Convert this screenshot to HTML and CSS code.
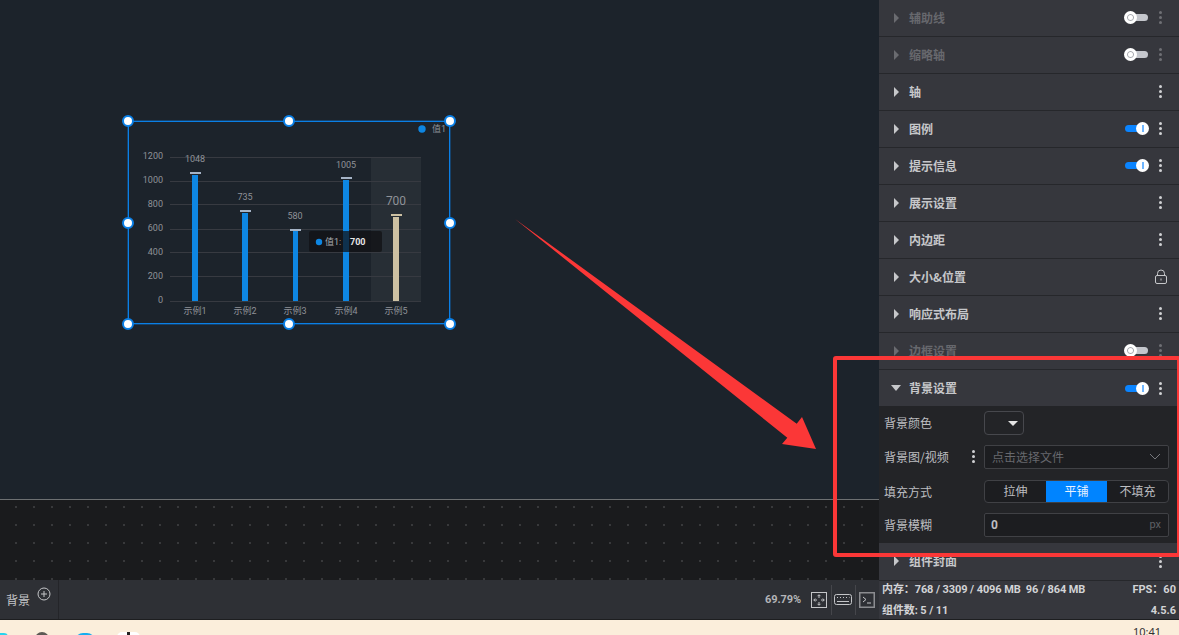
FILE: index.html
```html
<!DOCTYPE html>
<html lang="zh-CN">
<head>
  <meta charset="UTF-8" />
  <title>背景设置</title>
  <link rel="stylesheet" href="styles.css">
</head>

<body>
  <div class="app">
    <div class="workspace">
      <div class="stage">
        <div class="canvas">
          <!-- Selected chart widget -->
          <div class="widget">
            <svg class="chart" width="322" height="203" viewBox="0 0 322 203">
              <rect class="band" x="243" y="36" width="50" height="144" />
              <g class="grid">
                <line x1="42" x2="293" y1="36.500" y2="36.500" />
                <line x1="42" x2="293" y1="60.500" y2="60.500" />
                <line x1="42" x2="293" y1="83.500" y2="83.500" />
                <line x1="42" x2="293" y1="108.500" y2="108.500" />
                <line x1="42" x2="293" y1="131.500" y2="131.500" />
                <line x1="42" x2="293" y1="155.500" y2="155.500" />
                <line x1="42" x2="293" y1="180.500" y2="180.500" />
              </g>
              <g class="tick" text-anchor="end">
                <text x="35" y="38">1200</text>
                <text x="35" y="62">1000</text>
                <text x="35" y="86">800</text>
                <text x="35" y="110">600</text>
                <text x="35" y="134">400</text>
                <text x="35" y="158">200</text>
                <text x="35" y="182">0</text>
              </g>
              <g class="bar">
                <rect x="64" y="54" width="6" height="126" />
                <rect x="114" y="92" width="6" height="88" />
                <rect x="165" y="110" width="5" height="70" />
                <rect x="215" y="59" width="6" height="121" />
              </g>
              <rect class="bar-on" x="265" y="96" width="6" height="84" />
              <g class="cap">
                <rect x="62" y="51" width="11" height="2" />
                <rect x="112" y="89" width="11" height="2" />
                <rect x="162" y="108" width="11" height="2" />
                <rect x="213" y="56" width="11" height="2" />
              </g>
              <rect class="cap-on" x="263" y="93" width="11" height="2" />
              <g class="tick" text-anchor="middle">
                <text x="67" y="41">1048</text>
                <text x="117" y="79">735</text>
                <text x="167" y="98">580</text>
                <text x="218" y="47">1005</text>
                <text class="tick-on" x="268" y="84">700</text>
                <text x="67" y="193">示例1</text>
                <text x="117" y="193">示例2</text>
                <text x="167" y="193">示例3</text>
                <text x="218" y="193">示例4</text>
                <text x="268" y="193">示例5</text>
              </g>
              <circle class="dot" cx="294" cy="8" r="3.700" />
              <text class="tick" x="304" y="11">值1</text>
              <!-- Tooltip -->
              <rect class="tip" x="181" y="110" width="73" height="21" rx="2" />
              <circle class="dot" cx="191" cy="121" r="3.200" />
              <text class="tip-key" x="197" y="124">值1:</text>
              <text class="tip-val" x="222" y="124">700</text>
            </svg>
            <span class="handle tl"></span>
            <span class="handle tc"></span>
            <span class="handle tr"></span>
            <span class="handle ml"></span>
            <span class="handle mr"></span>
            <span class="handle bl"></span>
            <span class="handle bc"></span>
            <span class="handle br"></span>
          </div>
        </div>
        <div class="ruler"></div>
      </div>

      <div class="panel">
        <div class="row off"><i class="caret"></i><span class="row-title">辅助线</span><span class="switch"></span><span class="more"><i></i><i></i><i></i></span></div>
        <div class="row off"><i class="caret"></i><span class="row-title">缩略轴</span><span class="switch"></span><span class="more"><i></i><i></i><i></i></span></div>
        <div class="row"><i class="caret"></i><span class="row-title">轴</span><span class="more"><i></i><i></i><i></i></span></div>
        <div class="row"><i class="caret"></i><span class="row-title">图例</span><span class="switch on"></span><span class="more"><i></i><i></i><i></i></span></div>
        <div class="row"><i class="caret"></i><span class="row-title">提示信息</span><span class="switch on"></span><span class="more"><i></i><i></i><i></i></span></div>
        <div class="row"><i class="caret"></i><span class="row-title">展示设置</span><span class="more"><i></i><i></i><i></i></span></div>
        <div class="row"><i class="caret"></i><span class="row-title">内边距</span><span class="more"><i></i><i></i><i></i></span></div>
        <div class="row"><i class="caret"></i><span class="row-title">大小&amp;位置</span>
          <svg class="lock" width="14" height="16" viewBox="0 0 14 16">
            <path d="M3.500 6.500V4.500a3.500 3.500 0 0 1 7 0v2" />
            <rect x="1.500" y="6.500" width="11" height="8" rx="1.500" />
            <line x1="7" y1="9.500" x2="7" y2="11.500" />
          </svg>
        </div>
        <div class="row"><i class="caret"></i><span class="row-title">响应式布局</span><span class="more"><i></i><i></i><i></i></span></div>
        <div class="row off"><i class="caret"></i><span class="row-title">边框设置</span><span class="switch"></span><span class="more"><i></i><i></i><i></i></span></div>
        <div class="row open"><i class="caret"></i><span class="row-title">背景设置</span><span class="switch on"></span><span class="more"><i></i><i></i><i></i></span></div>

        <div class="form">
          <div class="field">
            <label class="field-label">背景颜色</label>
            <div class="color-btn"><i class="color-arrow"></i></div>
          </div>
          <div class="field">
            <label class="field-label">背景图/视频</label>
            <span class="more small"><i></i><i></i><i></i></span>
            <div class="input select">
              <span class="placeholder">点击选择文件</span>
              <svg width="12" height="7" viewBox="0 0 12 7"><path d="M1 1l5 5 5-5" /></svg>
            </div>
          </div>
          <div class="field">
            <label class="field-label">填充方式</label>
            <div class="segments">
              <span class="segment">拉伸</span>
              <span class="segment active">平铺</span>
              <span class="segment">不填充</span>
            </div>
          </div>
          <div class="field">
            <label class="field-label">背景模糊</label>
            <div class="input">
              <span class="input-val">0</span>
              <span class="unit">px</span>
            </div>
          </div>
        </div>

        <div class="row last"><i class="caret"></i><span class="row-title">组件封面</span><span class="more"><i></i><i></i><i></i></span></div>
      </div>
    </div>

    <div class="statusrow">
      <div class="tabbar">
        <div class="tab">
          <span class="tab-name">背景</span>
          <svg class="tab-add" width="14" height="14" viewBox="0 0 14 14">
            <circle cx="7" cy="7" r="6" />
            <path d="M7 4v6M4 7h6" />
          </svg>
        </div>
        <div class="tools">
          <span class="zoom-val">69.79%</span>
          <svg class="tool" width="16" height="16" viewBox="0 0 16 16">
            <rect x="0.500" y="0.500" width="15" height="15" />
            <path d="M8 3v3M6.500 4.200L8 2.700l1.500 1.500M8 13v-3M6.500 11.800L8 13.300l1.500-1.500M3 8h3M4.200 6.500L2.700 8l1.500 1.500M13 8h-3M11.800 6.500L13.300 8l-1.500 1.500" />
          </svg>
          <span class="tool-sep"></span>
          <svg class="tool keys" width="18" height="11" viewBox="0 0 18 11">
            <rect x="0.500" y="0.500" width="17" height="10" rx="2" />
            <path d="M3 3.500h1M6 3.500h1M9 3.500h1M12 3.500h1M15 3.500h0.500M3 7.500h12" />
          </svg>
          <span class="tool-sep near"></span>
          <svg class="tool term" width="16" height="16" viewBox="0 0 16 16">
            <rect x="0.750" y="0.750" width="14.500" height="14.500" />
            <path d="M4 5l3 2.500L4 10M8 11h4" />
          </svg>
        </div>
      </div>
      <div class="stats">
        <div class="stats-line"><span class="tight">内存：768 / 3309 / 4096 MB&nbsp;&nbsp;96 / 864 MB</span><span>FPS：60</span></div>
        <div class="stats-line"><span class="tight">组件数: 5 / 11</span><span>4.5.6</span></div>
      </div>
    </div>

    <div class="taskbar">
      <i class="app-icon cyan"></i>
      <i class="app-icon grey"></i>
      <i class="app-icon blue"></i>
      <i class="app-icon white"></i>
      <span class="clock">10:41</span>
    </div>
  </div>

  <!-- Red annotation drawn on top of the screenshot -->
  <div class="mark-box"></div>
  <svg class="mark-arrow" width="320" height="240" viewBox="0 0 320 240">
    <polygon points="0,0 281.700,204.700 287,198 301,230 267,225 272.300,218.700" />
  </svg>
</body>
</html>
```

FILE: styles.css
```css
* {
  box-sizing: border-box;
}

body {
  margin: 0;
  background-color: #1c232b;
  font-family: "Noto Sans CJK SC", Roboto, sans-serif;
  font-size: 12px;
  color: #c4c5c8;
  overflow: hidden;
}

.app {
  display: flex;
  flex-direction: column;
  height: 635px;
  overflow: hidden;
}

.workspace {
  display: flex;
  height: 580px;
}

.stage {
  flex: 1;
  display: flex;
  flex-direction: column;
}

.canvas {
  flex: 1;
  position: relative;
  background: #1c232b;
}

.ruler {
  height: 81px;
  border-top: 1px solid #6d7072;
  background-color: #1a1b1d;
  background-image: radial-gradient(circle, #38393b 0.8px, transparent 1px);
  background-size: 18px 18px;
  background-position: 7px -2px;
}

/* widget on the canvas */
.widget {
  position: absolute;
  left: 128px;
  top: 121px;
  width: 322px;
  height: 203px;
  box-shadow: inset 0 0 0 1px #0a7fe6, 0 0 0 1px rgba(10, 127, 230, 0.35);
}

.chart {
  display: block;
  font-family: Roboto, "Noto Sans CJK SC", sans-serif;
}

.band {
  fill: rgba(255, 255, 255, 0.05);
}

.grid line {
  stroke: #373a41;
  stroke-width: 1;
}

.tick text,
text.tick {
  fill: #8f9298;
  font-size: 9px;
}

.tick .tick-on {
  font-size: 12px;
}

.bar rect {
  fill: #0e86e2;
}

.bar-on {
  fill: #cdc1a3;
}

.cap rect {
  fill: #a5b3c6;
}

.cap-on {
  fill: #cdc1a3;
}

.dot {
  fill: #0e86e2;
}

.tip {
  fill: rgba(16, 17, 20, 0.72);
}

.tip-key {
  fill: #a9abaf;
  font-size: 9px;
}

.tip-val {
  fill: #e6e6e6;
  font-size: 9px;
  font-weight: bold;
}

.handle {
  position: absolute;
  width: 12px;
  height: 12px;
  margin: -6px 0 0 -6px;
  background: #fff;
  border: 2px solid #0a7fe6;
  border-radius: 50%;
}

.tl { left: 0; top: 0; }
.tc { left: 50%; top: 0; }
.tr { left: 100%; top: 0; }
.ml { left: 0; top: 50%; }
.mr { left: 100%; top: 50%; }
.bl { left: 0; top: 100%; }
.bc { left: 50%; top: 100%; }
.br { left: 100%; top: 100%; }

/* right panel */
.panel {
  width: 300px;
  background: #36373d;
}

.row {
  display: flex;
  align-items: center;
  height: 37px;
  padding-bottom: 1px;
  border-bottom: 1px solid #26272b;
  background: #36373d;
}

.row.open {
  height: 36px;
  border-bottom: none;
  padding-bottom: 0;
}

.row.last {
  border-bottom: none;
}

.caret {
  width: 0;
  height: 0;
  margin: 0 10px 0 15px;
  border-style: solid;
  border-width: 5px 0 5px 5px;
  border-color: transparent transparent transparent #c6c7ca;
}

.row.open .caret {
  margin: 0 8px 0 12px;
  border-width: 6px 5px 0 5px;
  border-color: #c6c7ca transparent transparent transparent;
}

.row-title {
  flex: 1;
  font-weight: bold;
  color: #c6c7ca;
  line-height: 16px;
}

.row.off .row-title {
  color: #67686d;
}

.row.off .caret {
  border-left-color: #6a6b70;
}

.switch {
  position: relative;
  width: 23px;
  height: 7px;
  margin-right: 11px;
  background: #c4c6cc;
  border-radius: 4px;
}

.switch::after {
  content: "";
  position: absolute;
  box-sizing: border-box;
  left: -1px;
  top: -3px;
  width: 13px;
  height: 13px;
  background: #fff;
  border: 3px solid #fff;
  border-radius: 50%;
  box-shadow: inset 0 0 0 1px #a5a7ad;
}

.switch.on {
  background: #0a84ff;
}

.switch.on::after {
  left: 11px;
  border: none;
  box-shadow: none;
  background: linear-gradient(#6fb6ff, #6fb6ff) center / 2px 7px no-repeat #fff;
}

.more {
  display: flex;
  flex-direction: column;
  gap: 2px;
  width: 3px;
  margin-right: 17px;
}

.more i {
  width: 3px;
  height: 3px;
  background: #d0d1d4;
  border-radius: 50%;
}

.row.off .more i {
  background: #6f7075;
}

.more.small {
  position: absolute;
  left: 88px;
  top: 5px;
  margin: 0;
}

.lock {
  margin-right: 11px;
  fill: none;
  stroke: #c6c7ca;
  stroke-width: 1;
}

/* background form */
.form {
  height: 137px;
  padding: 5px 10px 0 5px;
  background: #232427;
}

.field {
  position: relative;
  display: flex;
  align-items: center;
  height: 24px;
  margin-bottom: 10px;
}

.field:nth-child(3) {
  height: 23px;
  margin-top: 11px;
}

.field-label {
  width: 100px;
  color: #bdbec1;
  line-height: 16px;
}

.color-btn {
  display: flex;
  align-items: center;
  justify-content: flex-end;
  width: 40px;
  height: 24px;
  padding-right: 5px;
  border: 1px solid #47484d;
  border-radius: 4px;
  background: #232427;
}

.color-arrow {
  width: 0;
  height: 0;
  border-style: solid;
  border-width: 5px 5px 0 5px;
  border-color: #e4e4e4 transparent transparent transparent;
}

.input {
  display: flex;
  align-items: center;
  justify-content: space-between;
  width: 185px;
  height: 24px;
  padding: 0 7px 1px 6px;
  background: #1c1d20;
  border: 1px solid #404145;
  border-radius: 2px;
}

.input svg {
  fill: none;
  stroke: #77787d;
}

.placeholder {
  margin-left: 1px;
  color: #67686d;
}

.input-val {
  font-family: Roboto, sans-serif;
  font-weight: bold;
  color: #bdbec1;
}

.unit {
  font-family: Roboto, sans-serif;
  font-size: 11px;
  color: #5f6065;
}

.segments {
  display: flex;
  width: 185px;
  height: 23px;
  background: #1c1d20;
  border: 1px solid #404145;
  border-radius: 4px;
  overflow: hidden;
}

.segment {
  flex: 1;
  text-align: center;
  line-height: 20px;
  color: #bdbec1;
}

.segment.active {
  background: #0084ff;
  color: #e8f2ff;
}

/* bottom bars */
.statusrow {
  display: flex;
  height: 40px;
  border-bottom: 1px solid #1d1e20;
}

.tabbar {
  flex: 1;
  display: flex;
  background: #2e3035;
}

.tab {
  position: relative;
  width: 59px;
  height: 39px;
  border-right: 1px solid #242529;
}

.tab-name {
  position: absolute;
  left: 6px;
  top: 12px;
  color: #c4c5c8;
  line-height: 16px;
}

.tab-add {
  position: absolute;
  left: 37px;
  top: 7px;
  fill: none;
  stroke: #c4c5c8;
}

.tools {
  flex: 1;
  display: flex;
  align-items: center;
  justify-content: flex-end;
  padding-right: 4px;
}

.zoom-val {
  margin-right: 10px;
  font-family: Roboto, sans-serif;
  font-size: 11px;
  font-weight: bold;
  letter-spacing: -0.1px;
  color: #b4b5b8;
}

.tool {
  fill: none;
  stroke: #c4c5c8;
  stroke-width: 1;
}

.tool.keys {
  margin-left: -1px;
}

.tool.term rect {
  stroke: #8b8c90;
  stroke-width: 1.500;
}

.tool-sep {
  width: 1px;
  height: 30px;
  margin: 0 3px 0 4px;
  background: #45464b;
}

.tool-sep.near {
  margin-left: 3px;
}

.stats {
  width: 300px;
  padding: 0 3px;
  background: #36373d;
  border-top: 1px solid #26272b;
  font-family: Roboto, "Noto Sans CJK SC", sans-serif;
  font-weight: bold;
  font-size: 11px;
  color: #d2d3d6;
}

.stats-line {
  display: flex;
  justify-content: space-between;
  height: 20px;
  line-height: 17px;
  white-space: pre;
}

.stats-line + .stats-line {
  line-height: 19px;
}

.tight {
  letter-spacing: -0.1px;
}

.taskbar {
  position: relative;
  flex: 1;
  display: flex;
  align-items: flex-start;
  background: #fbeedb;
  overflow: hidden;
}

.app-icon {
  display: block;
  margin-top: 12px;
  height: 12px;
}

.cyan {
  width: 8px;
  margin-top: 13px;
  background: #27d3ee;
  border-radius: 0 4px 0 0;
}

.grey {
  width: 14px;
  margin-left: 27px;
  background: #5d5a55;
  border-radius: 7px 7px 0 0;
}

.blue {
  width: 20px;
  margin-left: 26px;
  margin-top: 13px;
  background: #16aef0;
  border-radius: 8px 8px 0 0;
}

.white {
  width: 23px;
  margin-left: 22px;
  background: linear-gradient(#222, #222) center top / 3px 4px no-repeat #fff;
  border-radius: 5px 5px 0 0;
}

.clock {
  position: absolute;
  right: 18px;
  top: 5px;
  font-family: "Noto Sans", sans-serif;
  font-size: 11px;
  line-height: 14px;
  color: #333;
}

/* annotation */
.mark-box {
  position: absolute;
  left: 833px;
  top: 356px;
  width: 348px;
  height: 201px;
  border: 4px solid #fb3737;
  border-radius: 3px;
}

.mark-arrow {
  position: absolute;
  left: 515px;
  top: 219px;
}

.mark-arrow polygon {
  fill: #fb3737;
}
```
